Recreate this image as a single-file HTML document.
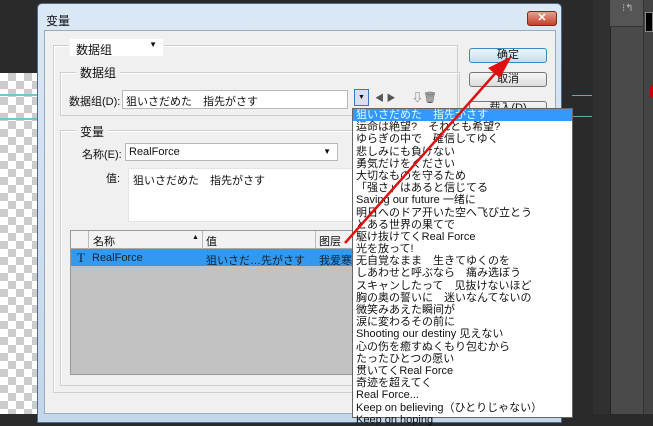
<!DOCTYPE html><html><head><meta charset="utf-8"><style>
*{margin:0;padding:0;box-sizing:border-box}
body{width:653px;height:414px;overflow:hidden;background:#2a2a2a;position:relative;font-family:"Liberation Sans","Noto Sans CJK JP",sans-serif;font-size:11px;color:#111}
.a{position:absolute}
.chk{background-color:#fff;background-image:linear-gradient(45deg,#ccc 25%,transparent 25%,transparent 75%,#ccc 75%),linear-gradient(45deg,#ccc 25%,transparent 25%,transparent 75%,#ccc 75%);background-size:16px 16px;background-position:0 0,8px 8px}
.grp{border:1px solid #cfcfcf;box-shadow:1px 1px 0 #fff inset}
.lbl{background:#f0f0f0;padding:0 4px;font-size:12px}
.in{background:#fff;border:1px solid #b8b8b8}
.btn{border:1px solid #777;border-radius:3px;background:linear-gradient(#f6f6f6,#dcdcdc);text-align:center;font-size:11px;line-height:13px}
.list div{height:12.2px;line-height:12.2px;font-size:11px;padding-left:3px;white-space:nowrap}
</style></head><body>
<div class="a chk" style="left:0;top:73px;width:40px;height:341px"></div>
<div class="a" style="left:0;top:94px;width:40px;height:2px;background:#6cc"></div>
<div class="a" style="left:0;top:118px;width:40px;height:2px;background:#6cc"></div>
<div class="a" style="left:572px;top:95px;width:20px;height:1px;background:#6aa"></div>
<div class="a" style="left:572px;top:116px;width:20px;height:1px;background:#6aa"></div>
<div class="a" style="left:593px;top:0;width:17px;height:414px;background:#303030"></div>
<div class="a" style="left:610px;top:0;width:33px;height:414px;background:#4a4a4a;border-left:1px solid #222"></div>
<div class="a" style="left:610px;top:0;width:33px;height:27px;background:#555;border-bottom:1px solid #333;color:#bbb;font-size:10px;padding:3px 0 0 12px">⁝↰</div>
<div class="a" style="left:643px;top:0;width:10px;height:414px;background:#444;border-left:1px solid #333"></div>
<div class="a" style="left:645px;top:12px;width:8px;height:20px;background:#000;border:1px solid #888"></div>
<div class="a" style="left:650px;top:85px;width:3px;height:12px;background:#c00"></div>
<!-- dialog -->
<div class="a" style="left:37px;top:3px;width:525px;height:420px;background:linear-gradient(#dbe8f5,#c3d6ea);border:1px solid #4d6a8a;border-radius:5px 5px 0 0"></div>
<div class="a" style="left:46px;top:12px;font-size:12px">变量</div>
<div class="a" style="left:527px;top:11px;width:30px;height:15px;background:linear-gradient(#e8a090,#c0402a);border:1px solid #7a2a1a;border-radius:3px;color:#fff;font-size:11px;text-align:center;line-height:13px;font-weight:bold">✕</div>
<div class="a" style="left:44px;top:30px;width:512px;height:384px;background:#f0f0f0;border:1px solid #9ab"></div>
<div class="a grp" style="left:53px;top:45px;width:405px;height:348px"></div>
<div class="a in" style="left:69px;top:38px;width:95px;height:19px;border-color:#f0f0f0;padding:2px 6px;font-size:12px">数据组<span style="position:absolute;right:6px;top:1px;font-size:8px">▼</span></div>
<div class="a grp" style="left:60px;top:72px;width:400px;height:44px"></div>
<div class="a lbl" style="left:76px;top:64px">数据组</div>
<div class="a" style="left:69px;top:93px;font-size:11px">数据组(D):</div>
<div class="a in" style="left:122px;top:90px;width:226px;height:19px;padding:2px 3px">狙いさだめた　指先がさす</div>
<div class="a" style="left:354px;top:89px;width:15px;height:17px;border:1px solid #3a78b8;background:#dde;font-size:7px;text-align:center;line-height:15px">▼</div>
<div class="a" style="left:375px;top:91px;font-size:9px;color:#555">◀ ▶</div>
<div class="a" style="left:412px;top:89px;font-size:11px;color:#555">⇩🗑</div>
<div class="a grp" style="left:60px;top:130px;width:400px;height:256px"></div>
<div class="a lbl" style="left:76px;top:123px">变量</div>
<div class="a" style="left:82px;top:146px">名称(E):</div>
<div class="a in" style="left:125px;top:143px;width:213px;height:18px;padding:2px 3px">RealForce<span style="position:absolute;right:6px;top:3px;font-size:8px">▼</span></div>
<div class="a" style="left:106px;top:170px">值:</div>
<div class="a in" style="left:128px;top:168px;width:226px;height:54px;padding:3px 4px;border-color:#e4e4e4">狙いさだめた　指先がさす</div>
<div class="a" style="left:70px;top:230px;width:284px;height:145px;background:#c2c2c2;border:1px solid #999"></div>
<div class="a" style="left:71px;top:231px;width:283px;height:18px;background:#f2f2f2;border-bottom:1px solid #aaa"></div>
<div class="a" style="left:88px;top:231px;width:1px;height:18px;background:#bbb"></div>
<div class="a" style="left:202px;top:231px;width:1px;height:18px;background:#bbb"></div>
<div class="a" style="left:315px;top:231px;width:1px;height:18px;background:#bbb"></div>
<div class="a" style="left:93px;top:233px">名称</div>
<div class="a" style="left:192px;top:234px;font-size:7px">▲</div>
<div class="a" style="left:206px;top:233px">值</div>
<div class="a" style="left:319px;top:233px">图层</div>
<div class="a" style="left:71px;top:249px;width:283px;height:17px;background:#3399ee;color:#112"></div>
<div class="a" style="left:77px;top:250px;font-family:'Liberation Serif',serif;font-size:13px;color:#123">T</div>
<div class="a" style="left:92px;top:252px;color:#123">RealForce</div>
<div class="a" style="left:206px;top:252px;color:#123">狙いさだ…先がさす</div>
<div class="a" style="left:319px;top:252px;color:#123">我爱寒</div>
<div class="a btn" style="left:469px;top:48px;width:78px;height:15px;border-color:#3a8abf;background:linear-gradient(#eaf6fd,#bfe0f5)">确定</div>
<div class="a btn" style="left:469px;top:72px;width:78px;height:15px">取消</div>
<div class="a btn" style="left:469px;top:101px;width:78px;height:15px">载入(D)</div>
<!-- dropdown list -->
<div class="a list" style="left:352px;top:108px;width:221px;height:310px;background:#fff;border:1px solid #666">
<div style="background:#3399ff;color:#dff">狙いさだめた　指先がさす</div>
<div>运命は絶望?　それとも希望?</div>
<div>ゆらぎの中で　確信してゆく</div>
<div>悲しみにも負けない</div>
<div>勇気だけをください</div>
<div>大切なものを守るため</div>
<div>「强さ」はあると信じてる</div>
<div>Saving our future 一绪に</div>
<div>明日へのドア开いた空へ飞び立とう</div>
<div>とある世界の果てで</div>
<div>駆け抜けてくReal Force</div>
<div>光を放って!</div>
<div>无自覚なまま　生きてゆくのを</div>
<div>しあわせと呼ぶなら　痛み选ぼう</div>
<div>スキャンしたって　见抜けないほど</div>
<div>胸の奥の誓いに　迷いなんてないの</div>
<div>微笑みあえた瞬间が</div>
<div>涙に変わるその前に</div>
<div>Shooting our destiny 见えない</div>
<div>心の伤を癒すぬくもり包むから</div>
<div>たったひとつの愿い</div>
<div>贯いてくReal Force</div>
<div>奇迹を超えてく</div>
<div>Real Force...</div>
<div>Keep on believing（ひとりじゃない）</div>
<div>Keep on hoping</div>
</div>
<svg class="a" style="left:0;top:0" width="653" height="414"><line x1="345" y1="243" x2="500" y2="68" stroke="#e01010" stroke-width="2.5"/><polygon points="512,56 488,68 500,78" fill="#e01010"/></svg>
</body></html>
